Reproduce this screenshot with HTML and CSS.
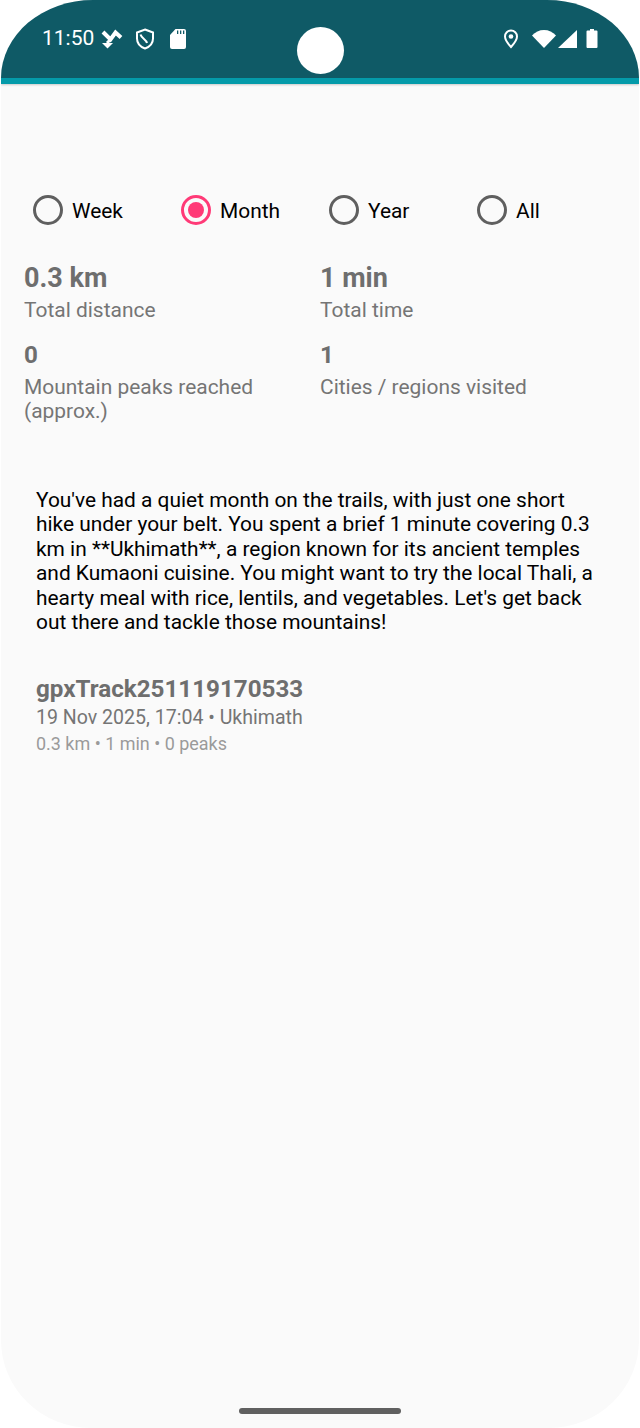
FILE: index.html
```html
<!DOCTYPE html>
<html lang="en">
<head>
    <meta charset="UTF-8">
    <title>Stats</title>
    <link rel="stylesheet" href="styles.css">
</head>
<body>
    <div class="screen">
        <div class="status-bar">
            <div class="status-left">
                <span class="clock">11:50</span>
                <svg class="icon-sync" width="24" height="24" viewBox="0 0 24 24"><path d="M3 4l7.500 7.500L15.500 4.500l5.500 5" fill="none" stroke="#fff" stroke-width="4"/><path d="M7 15l3-3" stroke="#fff" stroke-width="3"/><path d="M2 15h11l-5.500 5.500z" fill="#fff"/></svg>
                <svg class="icon-shield" width="22" height="24" viewBox="0 0 22 24"><path d="M11 2.500l8 3v6c0 4.500-3.200 8.300-8 10-4.800-1.700-8-5.500-8-10v-6z" fill="none" stroke="#fff" stroke-width="2"/><path d="M6.500 7.500c1 4 6 5 6.500 8.500" fill="none" stroke="#fff" stroke-width="2"/></svg>
                <svg class="icon-sd" width="16" height="20" viewBox="0 0 16 20"><path d="M5.500 0H14a2 2 0 0 1 2 2v16a2 2 0 0 1-2 2H2a2 2 0 0 1-2-2V6z" fill="#fff"/><path d="M7 1.500h1.300V5H7zM10 1.500h1.300V5H10zM13 1.500h1.300V5H13z" fill="#0f5a66"/></svg>
            </div>
            <div class="status-right">
                <svg width="16" height="20" viewBox="0 0 16 20"><path d="M8 1.500a6 6 0 0 0-6 6C2 11.500 8 18 8 18s6-6.500 6-10.500a6 6 0 0 0-6-6z" fill="none" stroke="#fff" stroke-width="2"/><circle cx="8" cy="7.500" r="2.300" fill="#fff"/></svg>
                <svg class="icon-wifi" width="24" height="20" viewBox="0 0 24 20"><path d="M0 6.500C3.200 3 7.300 1 12 1s8.800 2 12 5.500L12 19z" fill="#fff"/></svg>
                <svg class="icon-signal" width="20" height="20" viewBox="0 0 20 20"><path d="M19 1v18H0z" fill="#fff"/></svg>
                <svg class="icon-battery" width="12" height="20" viewBox="0 0 12 20"><path d="M4 0h4v1.500h2.500a1 1 0 0 1 1 1V18a1 1 0 0 1-1 1h-9a1 1 0 0 1-1-1V2.500a1 1 0 0 1 1-1H4z" fill="#fff"/></svg>
            </div>
        </div>
        <div class="camera"></div>

        <div class="content">
            <div class="radio-group">
                <div class="radio"><span class="dot"></span>Week</div>
                <div class="radio checked"><span class="dot"></span>Month</div>
                <div class="radio"><span class="dot"></span>Year</div>
                <div class="radio"><span class="dot"></span>All</div>
            </div>

            <div class="stats">
                <div class="stat">
                    <div class="value large">0.3 km</div>
                    <div class="label">Total distance</div>
                </div>
                <div class="stat">
                    <div class="value large">1 min</div>
                    <div class="label">Total time</div>
                </div>
                <div class="stat">
                    <div class="value">0</div>
                    <div class="label">Mountain peaks reached<br>(approx.)</div>
                </div>
                <div class="stat">
                    <div class="value">1</div>
                    <div class="label">Cities / regions visited</div>
                </div>
            </div>

            <p class="summary">You've had a quiet month on the trails, with just one short hike under your belt. You spent a brief 1 minute covering 0.3 km in **Ukhimath**, a region known for its ancient temples and Kumaoni cuisine. You might want to try the local Thali, a hearty meal with rice, lentils, and vegetables. Let's get back out there and tackle those mountains!</p>

            <div class="track">
                <div class="track-name">gpxTrack251119170533</div>
                <div class="track-date">19 Nov 2025, 17:04 • Ukhimath</div>
                <div class="track-meta">0.3 km • 1 min • 0 peaks</div>
            </div>
        </div>

        <div class="home-bar"></div>
    </div>
</body>
</html>
```

FILE: styles.css
```css
html, body { margin: 0; height: 100%; background: #fff; }
body { font-family: Roboto, sans-serif; }

.screen {
    position: relative;
    height: 1428px;
    margin: 0 1px;
    background: #fafafa;
    border-radius: 92px 92px 90px 90px / 78px 78px 88px 88px;
    overflow: hidden;
}

.status-bar {
    height: 84px;
    box-sizing: border-box;
    padding: 0 41px;
    background: #0f5a66;
    border-bottom: 6px solid #049aa9;
    box-shadow: 0 1px 2px rgba(0, 0, 0, 0.2);
    display: flex;
    justify-content: space-between;
}
.status-left { display: flex; align-items: flex-start; padding-top: 26px; }
.status-right { display: flex; align-items: flex-start; padding-top: 29px; }
.clock { color: #fff; font-size: 21px; line-height: 25px; }
.icon-sync { margin-left: 6px; margin-top: 2px; }
.icon-shield { margin-left: 10px; margin-top: 1px; }
.icon-sd { margin-left: 14px; margin-top: 3px; }
.icon-wifi { margin-left: 13px; }
.icon-signal { margin-left: 2px; }
.icon-battery { margin-left: 8px; }

.camera {
    position: absolute;
    top: 27px;
    left: 296px;
    width: 47px;
    height: 47px;
    border-radius: 50%;
    background: #fff;
}

.content { padding: 106px 0 0 23px; }

.radio-group { display: flex; padding-left: 9px; }
.radio { display: flex; align-items: center; width: 148px; height: 42px; font-size: 20.900px; color: #000; }
.dot {
    width: 30px;
    height: 30px;
    box-sizing: border-box;
    border: 3px solid #5f5f5f;
    border-radius: 50%;
    margin: 0 9px 2px 0;
    display: flex;
    align-items: center;
    justify-content: center;
}
.radio.checked .dot { border-color: #ff3a77; }
.radio.checked .dot::after { content: ""; width: 16px; height: 16px; border-radius: 50%; background: #ff3a77; }

.stats { display: grid; grid-template-columns: 296px 1fr; margin-top: 30px; row-gap: 18px; }
.value { font-size: 24.200px; font-weight: 700; line-height: 28px; color: #6e6e6e; margin-bottom: 6px; }
.value.large { font-size: 27px; line-height: 32px; margin-bottom: 4px; }
.label { font-size: 20.950px; line-height: 24.500px; color: #757575; }

.summary {
    margin: 64px 0 0 12px;
    width: 560px;
    font-size: 20.900px;
    line-height: 24.500px;
    color: #000;
}

.track { margin: 40px 0 0 12px; }
.track-name { font-size: 24.200px; font-weight: 700; line-height: 28px; color: #6e6e6e; }
.track-date { font-size: 19.560px; line-height: 27px; margin-top: 1px; color: #757575; }
.track-meta { font-size: 17.970px; line-height: 24px; margin-top: 1px; color: #9a9a9a; }

.home-bar {
    position: absolute;
    left: 238px;
    bottom: 14px;
    width: 162px;
    height: 6px;
    border-radius: 3px;
    background: #606060;
}
```
